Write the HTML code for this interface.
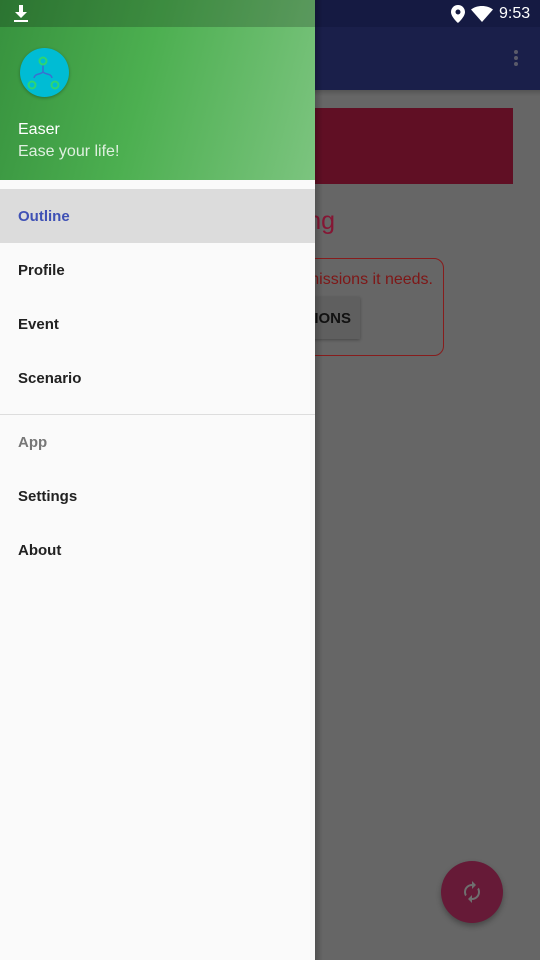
<!DOCTYPE html>
<html><head><style>
body{margin:0;width:540px;height:960px;overflow:hidden;position:relative;font-family:"Liberation Sans",sans-serif;background:#666}
.abs{position:absolute}
</style></head><body>
<div class="abs" style="left:0;top:0;width:540px;height:27px;background:#151a42"></div>
<div class="abs" style="left:0;top:27px;width:540px;height:63px;background:#1a1f4a"></div>
<div class="abs" style="left:514px;top:50px;width:4px;height:4px;border-radius:2px;background:#5a5a6a;box-shadow:0 6px 0 #5a5a6a,0 12px 0 #5a5a6a"></div>
<div class="abs" style="left:0;top:90px;width:540px;height:6px;background:linear-gradient(#555,#666)"></div>
<div class="abs" style="left:290px;top:108px;width:223px;height:76px;background:#600f24"></div>
<div class="abs" style="left:100px;top:207px;width:235px;text-align:right;font-size:25px;color:#851634">ng</div>
<div class="abs" style="left:260px;top:258px;width:182px;height:96px;border:1px solid #871c1c;border-radius:10px"></div>
<div class="abs" style="left:100px;top:271px;width:333px;text-align:right;font-size:16px;color:#7e1717;white-space:nowrap">missions it needs.</div>
<div class="abs" style="left:280px;top:297px;width:80px;height:42px;background:#5f5f5f;box-shadow:0 1px 3px rgba(0,0,0,.3)"></div>
<div class="abs" style="left:280px;top:310px;width:71px;text-align:right;font-size:15px;font-weight:bold;color:#111">IONS</div>
<div class="abs" style="left:441px;top:861px;width:62px;height:62px;border-radius:50%;background:#661a37;box-shadow:0 3px 6px rgba(0,0,0,.3)"></div>
<svg class="abs" style="left:460px;top:880px" width="24" height="24" viewBox="0 0 24 24"><path d="M12 6V9L16 5L12 1V4C7.6 4 4 7.6 4 12c0 1.6.5 3 1.2 4.2l1.5-1.5C6.3 13.9 6 13 6 12c0-3.3 2.7-6 6-6zm6.8 1.8l-1.5 1.5c.4.8.7 1.7.7 2.7 0 3.300-2.7 6-6 6v-3l-4 4 4 4v-3c4.4 0 8-3.6 8-8 0-1.6-.5-3-1.2-4.2z" fill="#6f6f6f"/></svg>
<svg class="abs" style="left:451px;top:5px" width="14" height="18" viewBox="0 0 14 18"><path d="M7 0C3.1 0 0 3.1 0 7c0 5 7 11 7 11s7-6 7-11c0-3.9-3.1-7-7-7zm0 9.5A2.5 2.5 0 1 1 7 4.5a2.5 2.5 0 0 1 0 5z" fill="#fff"/></svg>
<svg class="abs" style="left:471px;top:6px" width="22" height="16" viewBox="0 0 22 16"><path d="M11 16L0 3.5C3 1.300 6.8 0 11 0s8 1.3 11 3.5z" fill="#fff"/></svg>
<div class="abs" style="left:499px;top:5px;font-size:16px;color:#fff">9:53</div>
<div class="abs" style="left:0;top:0;width:315px;height:960px;background:#fafafa"></div>
<div class="abs" style="left:0;top:0;width:315px;height:180px;background:linear-gradient(105deg,#37923e 0%,#4caf50 45%,#7cc47f 100%)"></div>
<div class="abs" style="left:0;top:0;width:315px;height:27px;background:rgba(0,0,0,.2)"></div>
<svg class="abs" style="left:13px;top:5px" width="16" height="18" viewBox="0 0 16 18"><path d="M6 0h4v7h4l-6 6-6-6h4zM1 15h14v2H1z" fill="#fff"/></svg>
<div class="abs" style="left:20px;top:48px;width:49px;height:49px;border-radius:50%;background:#00bcd4;box-shadow:0 1px 3px rgba(0,0,0,.3)"></div>
<svg class="abs" style="left:20px;top:48px" width="49" height="49" viewBox="0 0 49 49"><path d="M23 16v8M23 24c-3 3-8 1-9 6M23 24c3 3 8 1 9 6" stroke="#3b6fd0" stroke-width="1.5" fill="none"/><circle cx="23" cy="13" r="3.5" fill="#00bcd4" stroke="#2ed573" stroke-width="2"/><circle cx="12" cy="37" r="3.5" fill="#00bcd4" stroke="#2ed573" stroke-width="2"/><circle cx="35" cy="37" r="3.5" fill="#00bcd4" stroke="#2ed573" stroke-width="2"/></svg>
<div class="abs" style="left:18px;top:121px;font-size:16px;color:#fff">Easer</div>
<div class="abs" style="left:18px;top:143px;font-size:16px;color:#e0f0e0">Ease your life!</div>
<div class="abs" style="left:0;top:189px;width:315px;height:54px;background:#dcdcdc"></div>
<div class="abs" style="left:18px;top:208px;font-size:15px;font-weight:bold;color:#3f51b5">Outline</div>
<div class="abs" style="left:18px;top:262px;font-size:15px;font-weight:bold;color:#212121">Profile</div>
<div class="abs" style="left:18px;top:316px;font-size:15px;font-weight:bold;color:#212121">Event</div>
<div class="abs" style="left:18px;top:370px;font-size:15px;font-weight:bold;color:#212121">Scenario</div>
<div class="abs" style="left:0;top:414px;width:315px;height:1px;background:#ddd"></div>
<div class="abs" style="left:18px;top:434px;font-size:15px;font-weight:bold;color:#777">App</div>
<div class="abs" style="left:18px;top:488px;font-size:15px;font-weight:bold;color:#212121">Settings</div>
<div class="abs" style="left:18px;top:542px;font-size:15px;font-weight:bold;color:#212121">About</div>
<div class="abs" style="left:315px;top:0;width:8px;height:960px;background:linear-gradient(90deg,rgba(0,0,0,.2),rgba(0,0,0,0))"></div>
</body></html>
